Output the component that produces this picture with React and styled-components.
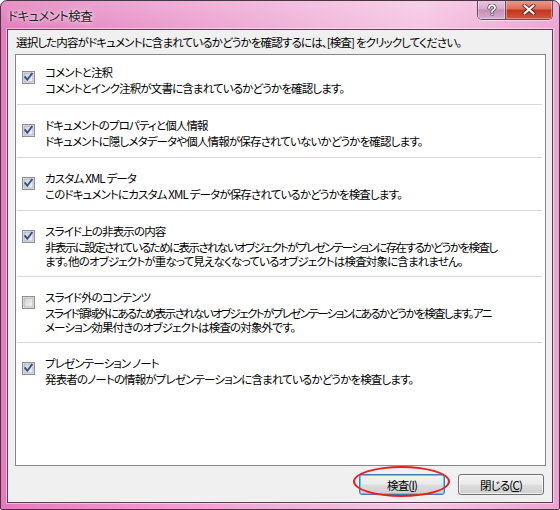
import React from "react";
import styled, { createGlobalStyle, css } from "styled-components";

const Global = createGlobalStyle`
  html, body { margin: 0; padding: 0; background: #ffffff; }
  body { font-family: "Noto Sans CJK JP", "Noto Sans", sans-serif; }
`;

const uiFont = css`
  font-family: "Noto Sans CJK JP", "Noto Sans", sans-serif;
  font-size: 11.5px;
  letter-spacing: -0.85px;
  font-feature-settings: "palt";
  color: #000;
`;

const Window = styled.div`
  position: relative;
  width: 560px;
  height: 510px;
  box-sizing: border-box;
  border: 1px solid #4a3342;
  border-radius: 7px 7px 2px 2px;
  background:
    linear-gradient(180deg, rgba(255,255,255,0.18) 0px, rgba(255,255,255,0) 30px),
    linear-gradient(90deg, #e27cbb 0%, #ea98cc 25%, #f1b5da 55%, #f5c6e3 75%, #eda3d1 100%);
  display: flex;
  flex-direction: column;
  padding: 0 6px 6px 6px;
  overflow: hidden;
`;

const TitleBar = styled.div`
  height: 28px;
  display: flex;
  align-items: flex-start;
  justify-content: space-between;
`;

const TitleText = styled.div`
  ${uiFont};
  font-size: 12.5px;
  letter-spacing: -0.6px;
  line-height: 30px;
  color: #1e1e1e;
  padding-left: 1px;
  text-shadow: 0 0 6px rgba(255,255,255,0.9), 0 0 2px rgba(255,255,255,0.8);
`;

const CaptionButtons = styled.div`
  display: flex;
  margin-top: -1px;
  border: 1px solid #6b4a5e;
  border-top: none;
  border-radius: 0 0 5px 5px;
  overflow: hidden;
  box-shadow: 0 1px 0 rgba(255,255,255,0.5);
`;

const CapBtn = styled.div`
  height: 19px;
  width: ${(p) => p.$w}px;
  display: flex;
  align-items: center;
  justify-content: center;
  box-sizing: border-box;
  border-left: ${(p) => (p.$first ? "none" : "1px solid #6b4a5e")};
  background: ${(p) =>
    p.$close
      ? "linear-gradient(180deg, #eaa090 0%, #dc6e58 45%, #c3361f 55%, #d4553a 100%)"
      : "linear-gradient(180deg, #eccbe0 0%, #d7a9c8 45%, #c68fb6 55%, #d8aed0 100%)"};
  box-shadow: inset 0 0 0 1px rgba(255,255,255,0.35);
`;

const Client = styled.div`
  flex: 1;
  display: flex;
  flex-direction: column;
  background: #f0f0f0;
  border: 1px solid #5b3e50;
  box-shadow: 0 0 0 1px rgba(255,255,255,0.45);
  padding: 0 6px 7px 7px;
  min-height: 0;
`;

const Intro = styled.div`
  ${uiFont};
  height: 24px;
  line-height: 24px;
  padding-left: 1px;
  white-space: nowrap;
`;

const Panel = styled.div`
  flex: 1;
  background: #ffffff;
  border: 1px solid #828790;
  display: flex;
  flex-direction: column;
  min-height: 0;
`;

const Item = styled.div`
  display: flex;
  align-items: flex-start;
  padding: ${(p) => (p.$first ? "9px" : "12px")} 0 ${(p) => 10 - p.$lines}px 5px;
  margin: 0 3px 0 1px;
  border-bottom: ${(p) => (p.$last ? "none" : "1px solid #d8d8d8")};
`;

const Box = styled.div`
  width: 13px;
  height: 13px;
  margin-top: 1px;
  flex: none;
  margin-right: 10px;
`;

const ItemText = styled.div`
  ${uiFont};
  display: flex;
  flex-direction: column;
`;

const ItemTitle = styled.div`
  height: 16px;
  line-height: 16px;
  white-space: nowrap;
`;

const Desc = styled.div`
  height: 14px;
  line-height: 14px;
  margin-top: ${(p) => (p.$cont ? 0 : 1)}px;
  letter-spacing: ${(p) => p.$ls ?? -0.85}px;
  white-space: nowrap;
`;

const ButtonRow = styled.div`
  position: relative;
  display: flex;
  justify-content: flex-end;
  gap: 13px;
  margin-top: 8px;
  padding-right: 2px;
`;

const Button = styled.div`
  ${uiFont};
  width: 86px;
  height: 21px;
  box-sizing: border-box;
  border: 1px solid ${(p) => (p.$default ? "#3c7fb1" : "#707070")};
  border-radius: 3px;
  background: linear-gradient(180deg, #f2f2f2 0%, #ebebeb 48%, #dddddd 52%, #cfcfcf 100%);
  box-shadow: inset 0 0 0 1px ${(p) => (p.$default ? "#48d4f8" : "rgba(255,255,255,0.7)")};
  display: flex;
  align-items: center;
  justify-content: center;
  u { text-decoration: underline; text-underline-offset: 1px; }
`;

const Ellipse = styled.div`
  position: absolute;
  left: ${(p) => p.$left}px;
  top: -8px;
  width: 97px;
  height: 31px;
  box-sizing: border-box;
  border: 2px solid #e41f26;
  border-radius: 50%;
  pointer-events: none;
`;

function CheckBox({ checked }) {
  const id = checked ? "cbg" : "cbu";
  return (
    <Box>
      <svg width="13" height="13" viewBox="0 0 13 13">
        <defs>
          <linearGradient id={id} x1="0" y1="0" x2="1" y2="1">
            <stop offset="0" stopColor={checked ? "#c8cfdc" : "#cfcfcf"} />
            <stop offset="1" stopColor={checked ? "#f4f6fa" : "#f6f6f6"} />
          </linearGradient>
        </defs>
        <rect x="0.5" y="0.5" width="12" height="12" fill="#f4f4f4" stroke="#8e8f8f" />
        <rect x="2" y="2" width="9" height="9" fill={`url(#${id})`} stroke={checked ? "#a8b1c4" : "#b5b5b5"} strokeWidth="1" />
        {checked && (
          <path d="M3.2 6.2 L5.3 8.8 L9.8 2.8" fill="none" stroke="#3a4f8a" strokeWidth="1.9" strokeLinecap="square" />
        )}
      </svg>
    </Box>
  );
}

const items = [
  {
    checked: true,
    title: "コメントと注釈",
    desc: [{ t: "コメントとインク注釈が文書に含まれているかどうかを確認します。" }],
  },
  {
    checked: true,
    title: "ドキュメントのプロパティと個人情報",
    desc: [{ t: "ドキュメントに隠しメタデータや個人情報が保存されていないかどうかを確認します。" }],
  },
  {
    checked: true,
    title: "カスタム XML データ",
    desc: [{ t: "このドキュメントにカスタム XML データが保存されているかどうかを検査します。" }],
  },
  {
    checked: true,
    title: "スライド上の非表示の内容",
    desc: [
      { t: "非表示に設定されているために表示されないオブジェクトがプレゼンテーションに存在するかどうかを検査し", ls: -1.55 },
      { t: "ます。他のオブジェクトが重なって見えなくなっているオブジェクトは検査対象に含まれません。" },
    ],
  },
  {
    checked: false,
    title: "スライド外のコンテンツ",
    desc: [
      { t: "スライド領域外にあるため表示されないオブジェクトがプレゼンテーションにあるかどうかを検査します。アニ", ls: -1.6 },
      { t: "メーション効果付きのオブジェクトは検査の対象外です。" },
    ],
  },
  {
    checked: true,
    title: "プレゼンテーション ノート",
    desc: [{ t: "発表者のノートの情報がプレゼンテーションに含まれているかどうかを検査します。" }],
  },
];

export default function App() {
  return (
    <>
      <Global />
      <Window>
        <TitleBar>
          <TitleText>ドキュメント検査</TitleText>
          <CaptionButtons>
            <CapBtn $w={27} $first>
              <svg width="10" height="12" viewBox="0 0 10 12">
                <path d="M2 4 Q2 1.2 5 1.2 Q8 1.2 8 3.8 Q8 5.4 6 6.2 Q5 6.7 5 8" fill="none" stroke="#4a3a48" strokeWidth="3.2" strokeLinecap="round" />
                <path d="M2 4 Q2 1.2 5 1.2 Q8 1.2 8 3.8 Q8 5.4 6 6.2 Q5 6.7 5 8" fill="none" stroke="#ffffff" strokeWidth="1.8" strokeLinecap="round" />
                <rect x="3.6" y="9.2" width="2.8" height="2.6" fill="#4a3a48" />
                <rect x="4.2" y="9.7" width="1.6" height="1.6" fill="#ffffff" />
              </svg>
            </CapBtn>
            <CapBtn $w={47} $close>
              <svg width="14" height="11" viewBox="0 0 14 11">
                <path d="M2.5 1.5 L11.5 9.5 M11.5 1.5 L2.5 9.5" stroke="#5a2a24" strokeWidth="4" strokeLinecap="round" />
                <path d="M2.5 1.5 L11.5 9.5 M11.5 1.5 L2.5 9.5" stroke="#ffffff" strokeWidth="2.2" strokeLinecap="round" />
              </svg>
            </CapBtn>
          </CaptionButtons>
        </TitleBar>
        <Client>
          <Intro>選択した内容がドキュメントに含まれているかどうかを確認するには、[検査] をクリックしてください。</Intro>
          <Panel>
            {items.map((it, i) => (
              <Item key={i} $first={i === 0} $last={i === items.length - 1} $lines={it.desc.length}>
                <CheckBox checked={it.checked} />
                <ItemText>
                  <ItemTitle>{it.title}</ItemTitle>
                  {it.desc.map((d, j) => (
                    <Desc key={j} $cont={j > 0} $ls={d.ls}>{d.t}</Desc>
                  ))}
                </ItemText>
              </Item>
            ))}
          </Panel>
          <ButtonRow>
            <Button $default>検査(<u>I</u>)</Button>
            <Button>閉じる(<u>C</u>)</Button>
            <Ellipse $left={338} />
          </ButtonRow>
        </Client>
      </Window>
    </>
  );
}
